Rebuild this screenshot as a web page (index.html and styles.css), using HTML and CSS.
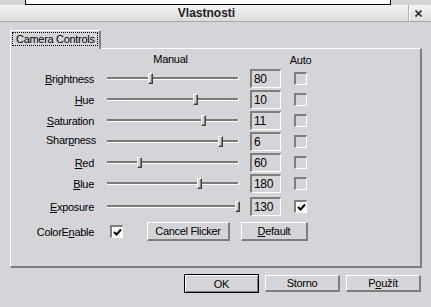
FILE: index.html
```html
<!DOCTYPE html>
<html>
<head>
    <meta charset="UTF-8">
    <title>Vlastnosti</title>
    <link rel="stylesheet" href="styles.css">
</head>
<body>
    <!-- window behind the dialog -->
    <div class="strip"><div class="strip-box"></div></div>

    <div class="titlebar">
        <span class="title">Vlastnosti</span>
        <span class="close">
            <svg width="7" height="7" viewBox="0 0 7 7"><path d="M0.5 0.5 L6.5 6.5 M6.5 0.5 L0.5 6.5" stroke="#333" stroke-width="1.7"/></svg>
        </span>
    </div>

    <div class="frame">
        <div class="tabs">
            <div class="tab"><span class="tab-label">Camera Controls</span></div>
        </div>

        <div class="panel">
            <div class="row head">
                <span class="label"></span>
                <span class="slider head-manual">Manual</span>
                <span class="edit-space"></span>
                <span class="check-space head-auto">Auto</span>
            </div>

            <div class="row">
                <span class="label"><u>B</u>rightness</span>
                <div class="slider"><div class="track"></div><div class="thumb" style="left: 43px"></div></div>
                <span class="edit">80</span>
                <span class="check"></span>
            </div>
            <div class="row">
                <span class="label"><u>H</u>ue</span>
                <div class="slider"><div class="track"></div><div class="thumb" style="left: 88px"></div></div>
                <span class="edit">10</span>
                <span class="check"></span>
            </div>
            <div class="row">
                <span class="label"><u>S</u>aturation</span>
                <div class="slider"><div class="track"></div><div class="thumb" style="left: 96px"></div></div>
                <span class="edit">11</span>
                <span class="check"></span>
            </div>
            <div class="row">
                <span class="label label-up">Shar<u>p</u>ness</span>
                <div class="slider"><div class="track"></div><div class="thumb" style="left: 113px"></div></div>
                <span class="edit">6</span>
                <span class="check"></span>
            </div>
            <div class="row">
                <span class="label"><u>R</u>ed</span>
                <div class="slider"><div class="track"></div><div class="thumb" style="left: 32px"></div></div>
                <span class="edit">60</span>
                <span class="check"></span>
            </div>
            <div class="row">
                <span class="label"><u>B</u>lue</span>
                <div class="slider"><div class="track"></div><div class="thumb" style="left: 92px"></div></div>
                <span class="edit">180</span>
                <span class="check"></span>
            </div>
            <div class="row row-exposure">
                <span class="label"><u>E</u>xposure</span>
                <div class="slider"><div class="track"></div><div class="thumb" style="left: 130px"></div></div>
                <span class="edit">130</span>
                <span class="check checked">
                    <svg width="9" height="9" viewBox="0 0 9 9"><polyline points="1,4 3.5,6.5 8,1.5" fill="none" stroke="#000" stroke-width="2"/></svg>
                </span>
            </div>

            <div class="row row-buttons">
                <span class="label">ColorE<u>n</u>able</span>
                <span class="check checked check-color">
                    <svg width="9" height="9" viewBox="0 0 9 9"><polyline points="1,4 3.5,6.5 8,1.5" fill="none" stroke="#000" stroke-width="2"/></svg>
                </span>
                <button type="button" class="btn btn-flicker">Cancel Flicker</button>
                <button type="button" class="btn btn-default"><u>D</u>efault</button>
            </div>
        </div>

        <div class="actions">
            <button type="button" class="btn btn-main btn-ok">OK</button>
            <button type="button" class="btn btn-main">Storno</button>
            <button type="button" class="btn btn-main">P<u>o</u>užít</button>
        </div>
    </div>
</body>
</html>
```

FILE: styles.css
```css
body {
    margin: 0;
    width: 431px;
    height: 307px;
    overflow: hidden;
    background-color: #d5d5d9;
    font-family: "Liberation Sans", Arial, sans-serif;
    font-size: 11px;
    letter-spacing: -0.3px;
    color: #000;
}

u {
    text-decoration: underline;
    text-underline-offset: 1px;
}

/* window peeking above the dialog */
.strip {
    height: 5px;
}

.strip-box {
    margin-left: 25px;
    width: 364px;
    height: 4px;
    background-color: #fff;
    border: 1px solid #000;
    border-top: none;
}

.titlebar {
    display: flex;
    height: 16px;
    background: linear-gradient(#f4f4f4, #dcdcdc);
    border-bottom: 1px solid #a8a8ac;
}

.title {
    flex: 1;
    padding-left: 5px;
    text-align: center;
    font-size: 12px;
    font-weight: bold;
    letter-spacing: 0;
    line-height: 16px;
    color: #222;
}

.close {
    display: flex;
    align-items: center;
    justify-content: center;
    width: 19px;
    margin-right: 3px;
    border-left: 1px solid #b0b0b0;
    box-shadow: inset 1px 0 #fff;
}

.frame {
    height: 282px;
    padding: 8px 9px 0 10px;
    border-bottom: 3px solid #000;
    box-shadow: inset 0 -1px #9c9c9c;
}

/* tab strip */
.tabs {
    display: flex;
}

.tab {
    position: relative;
    z-index: 1;
    width: 88px;
    height: 18px;
    margin-bottom: -1px;
    background-color: #d5d5d9;
    border-top: 1px solid #fff;
    border-left: 1px solid #fff;
    border-right: 2px solid #808080;
    border-top-right-radius: 2px;
}

.tab-label {
    display: block;
    margin: 1px 1px 0 1px;
    height: 14px;
    padding-left: 4px;
    line-height: 14px;
    outline: 1px dotted #000;
    outline-offset: -1px;
}

.panel {
    height: 217px;
    border-top: 1px solid #fff;
    border-left: 1px solid #fff;
    border-right: 2px solid #7e7e7e;
    border-bottom: 2px solid #7e7e7e;
}

/* control rows */
.row {
    display: flex;
    align-items: center;
    height: 21px;
}

.head {
    height: 19px;
    align-items: flex-end;
}

.head-manual {
    padding-right: 5px;
    box-sizing: border-box;
    text-align: center;
    line-height: 14px;
    margin-bottom: 2px;
}

.head-auto {
    display: flex;
    justify-content: center;
    line-height: 14px;
    margin-bottom: 1px;
}

.label {
    width: 83px;
    padding-right: 2px;
    text-align: right;
    white-space: nowrap;
}

.label-up {
    padding-right: 0;
    width: 85px;
    margin-top: -3px;
}

.slider {
    position: relative;
    display: flex;
    align-items: center;
    width: 136px;
    height: 21px;
    margin-left: 9px;
}

.head .slider {
    height: auto;
    display: block;
}

.track {
    flex: 1;
    margin: 0 2px;
    height: 2px;
    background-color: #7a7a7a;
    border-bottom: 1px solid #fff;
    border-right: 1px solid #fff;
}

.thumb {
    position: absolute;
    top: 5px;
    width: 3px;
    height: 9px;
    background-color: #d5d5d9;
    border-top: 1px solid #fff;
    border-left: 1px solid #fff;
    border-right: 1px solid #404040;
    border-bottom: 1px solid #404040;
    box-shadow: inset -1px -1px #808080;
}

.edit,
.edit-space {
    width: 31px;
    margin-left: 9px;
}

.edit {
    box-sizing: border-box;
    height: 19px;
    padding-left: 2px;
    line-height: 16px;
    font-size: 12px;
    border-top: 2px solid #7e7e7e;
    border-left: 2px solid #7e7e7e;
    border-right: 1px solid #fff;
    border-bottom: 1px solid #fff;
}

.check,
.check-space {
    width: 13px;
    margin-left: 13px;
}

.check {
    box-sizing: border-box;
    height: 13px;
    border-top: 2px solid #7e7e7e;
    border-left: 2px solid #7e7e7e;
    border-right: 1px solid #fff;
    border-bottom: 1px solid #fff;
}

.checked {
    display: flex;
    align-items: center;
    justify-content: center;
    background-color: #fff;
}

.row-exposure {
    margin-top: 2px;
}

.row-buttons {
    margin-top: 5px;
    height: 19px;
}

.check-color {
    margin-left: 14px;
}

/* push buttons */
.btn {
    box-sizing: border-box;
    height: 19px;
    padding: 0;
    background-color: #d5d5d9;
    font-family: "Liberation Sans", Arial, sans-serif;
    font-size: 11px;
    letter-spacing: -0.3px;
    color: #000;
    border-top: 1px solid #fff;
    border-left: 1px solid #fff;
    border-right: 2px solid #7e7e7e;
    border-bottom: 2px solid #7e7e7e;
}

.btn-flicker {
    width: 83px;
    margin-left: 24px;
}

.btn-default {
    width: 67px;
    margin-left: 11px;
}

.actions {
    display: flex;
    justify-content: flex-end;
    gap: 6px;
    margin-top: 6px;
    padding-right: 1px;
}

.btn-main {
    width: 75px;
    height: 17px;
    margin-top: 1px;
}

.btn-ok {
    height: 19px;
    margin-top: 0;
    border: 1px solid #000;
    box-shadow: inset 1px 1px #fff, inset -1px -1px #7e7e7e;
}
```
